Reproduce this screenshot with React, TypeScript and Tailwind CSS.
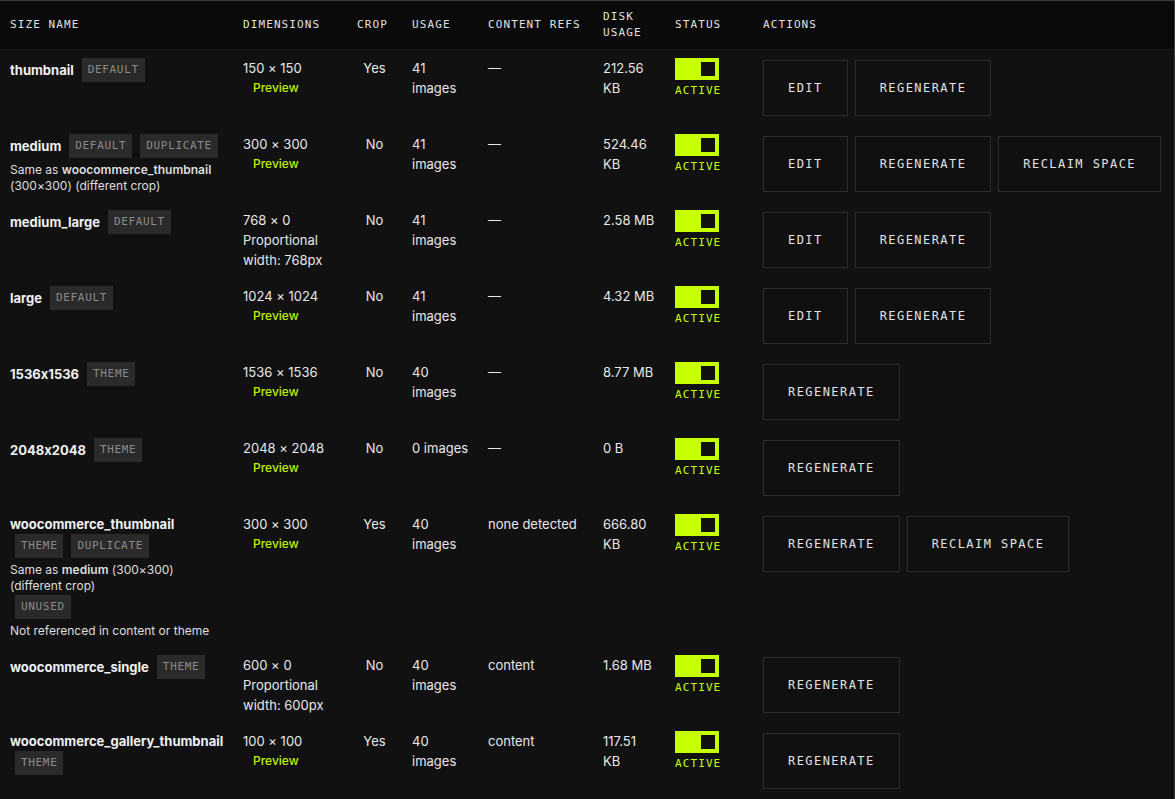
import React from "react"

type Tag = "DEFAULT" | "DUPLICATE" | "THEME" | "UNUSED"

type Row = {
  name: string
  tags: Tag[]
  note?: React.ReactNode
  unused?: boolean
  dims: string
  proportional?: string
  crop: string
  usage: string
  refs: string
  disk: string
  edit?: boolean
  reclaim?: boolean
}

const rows: Row[] = [
  { name: "thumbnail", tags: ["DEFAULT"], dims: "150 × 150", crop: "Yes", usage: "41 images", refs: "—", disk: "212.56 KB", edit: true },
  {
    name: "medium",
    tags: ["DEFAULT", "DUPLICATE"],
    note: (
      <>
        Same as <span className="font-semibold">woocommerce_thumbnail</span> (300×300) (different crop)
      </>
    ),
    dims: "300 × 300",
    crop: "No",
    usage: "41 images",
    refs: "—",
    disk: "524.46 KB",
    edit: true,
    reclaim: true,
  },
  { name: "medium_large", tags: ["DEFAULT"], dims: "768 × 0", proportional: "768px", crop: "No", usage: "41 images", refs: "—", disk: "2.58 MB", edit: true },
  { name: "large", tags: ["DEFAULT"], dims: "1024 × 1024", crop: "No", usage: "41 images", refs: "—", disk: "4.32 MB", edit: true },
  { name: "1536x1536", tags: ["THEME"], dims: "1536 × 1536", crop: "No", usage: "40 images", refs: "—", disk: "8.77 MB" },
  { name: "2048x2048", tags: ["THEME"], dims: "2048 × 2048", crop: "No", usage: "0 images", refs: "—", disk: "0 B" },
  {
    name: "woocommerce_thumbnail",
    tags: ["THEME", "DUPLICATE"],
    note: (
      <>
        Same as <span className="font-semibold">medium</span> (300×300) (different crop)
      </>
    ),
    unused: true,
    dims: "300 × 300",
    crop: "Yes",
    usage: "40 images",
    refs: "none detected",
    disk: "666.80 KB",
    reclaim: true,
  },
  { name: "woocommerce_single", tags: ["THEME"], dims: "600 × 0", proportional: "600px", crop: "No", usage: "40 images", refs: "content", disk: "1.68 MB" },
  { name: "woocommerce_gallery_thumbnail", tags: ["THEME"], dims: "100 × 100", crop: "Yes", usage: "40 images", refs: "content", disk: "117.51 KB" },
]

const mono = "font-['DejaVu_Sans_Mono','Liberation_Mono',monospace]"

function Badge({ label, className = "" }: { label: string; className?: string }) {
  return (
    <span
      className={`${mono} inline-flex h-6 items-center bg-[#2a2a2a] px-1.5 text-[11px] font-normal tracking-[0.06em] text-[#8a8a8a] ${className}`}
    >
      {label}
    </span>
  )
}

function ActionButton({ label }: { label: string }) {
  return (
    <button
      className={`${mono} h-14 border border-[#2c2c2c] bg-[#101010] px-6 text-[12px] tracking-[0.12em] text-[#e2e2e2]`}
    >
      {label}
    </button>
  )
}

function Toggle() {
  return (
    <div>
      <div className="flex h-[22px] w-[44px] items-center justify-end bg-[#c6ff00] p-1">
        <div className="h-3.5 w-3.5 bg-[#111111]" />
      </div>
      <div className={`${mono} mt-[3px] text-[11px] leading-4 tracking-[0.1em] text-[#c6ff00]`}>ACTIVE</div>
    </div>
  )
}

const th = `${mono} px-2.5 py-2 text-left align-middle text-[11px] font-normal leading-4 tracking-[0.1em] text-[#e0e0e0]`
const td = "px-2.5 py-2 align-top"

export default function App() {
  return (
    <div className="min-h-screen bg-[#111111] font-['Inter','Liberation_Sans',sans-serif] text-[13px] text-[#e8e8e8] [font-feature-settings:'calt'_0]">
      <div className="border-t border-r border-b border-[#3c3c3c]">
        <table className="w-full table-fixed border-collapse">
          <colgroup>
            <col className="w-[233px]" />
            <col className="w-[114px]" />
            <col className="w-[55px]" />
            <col className="w-[76px]" />
            <col className="w-[115px]" />
            <col className="w-[72px]" />
            <col className="w-[88px]" />
            <col />
          </colgroup>
          <thead>
            <tr className="h-12 border-b border-[#1b1b1b] bg-[#0a0a0a]">
              <th className={th}>SIZE NAME</th>
              <th className={th}>DIMENSIONS</th>
              <th className={th}>CROP</th>
              <th className={th}>USAGE</th>
              <th className={th}>CONTENT REFS</th>
              <th className={th}>DISK USAGE</th>
              <th className={th}>STATUS</th>
              <th className={th}>ACTIONS</th>
            </tr>
          </thead>
          <tbody>
            {rows.map((r) => (
              <tr key={r.name}>
                <td className={td}>
                  <div className="flex flex-wrap items-center gap-x-[3px]">
                    <span className="text-[13px] leading-5 font-bold text-[#f0f0f0]">{r.name}</span>
                    {r.tags.map((t) => (
                      <Badge key={t} label={t} className="ml-[5px]" />
                    ))}
                  </div>
                  {r.note && <div className="mt-1 text-[12px] leading-4 text-[#dedede]">{r.note}</div>}
                  {r.unused && (
                    <>
                      <div className="mt-px">
                        <Badge label="UNUSED" className="ml-[5px]" />
                      </div>
                      <div className="mt-1 text-[12px] leading-4 text-[#dedede]">Not referenced in content or theme</div>
                    </>
                  )}
                </td>
                <td className={`${td} leading-5`}>
                  <div>{r.dims}</div>
                  {r.proportional ? (
                    <div>{`Proportional width: ${r.proportional}`}</div>
                  ) : (
                    <div className="pl-2.5 text-[12px] font-medium text-[#bff200]">Preview</div>
                  )}
                </td>
                <td className={`${td} text-center leading-5`}>{r.crop}</td>
                <td className="py-2 pr-1.5 pl-2.5 align-top leading-5">{r.usage}</td>
                <td className={`${td} leading-5`}>{r.refs}</td>
                <td className={`${td} leading-5`}>{r.disk}</td>
                <td className={td}>
                  <Toggle />
                </td>
                <td className="px-2.5 py-2.5 align-top">
                  <div className="flex gap-[7px]">
                    {r.edit && <ActionButton label="EDIT" />}
                    <ActionButton label="REGENERATE" />
                    {r.reclaim && <ActionButton label="RECLAIM SPACE" />}
                  </div>
                </td>
              </tr>
            ))}
          </tbody>
        </table>
      </div>
    </div>
  )
}
